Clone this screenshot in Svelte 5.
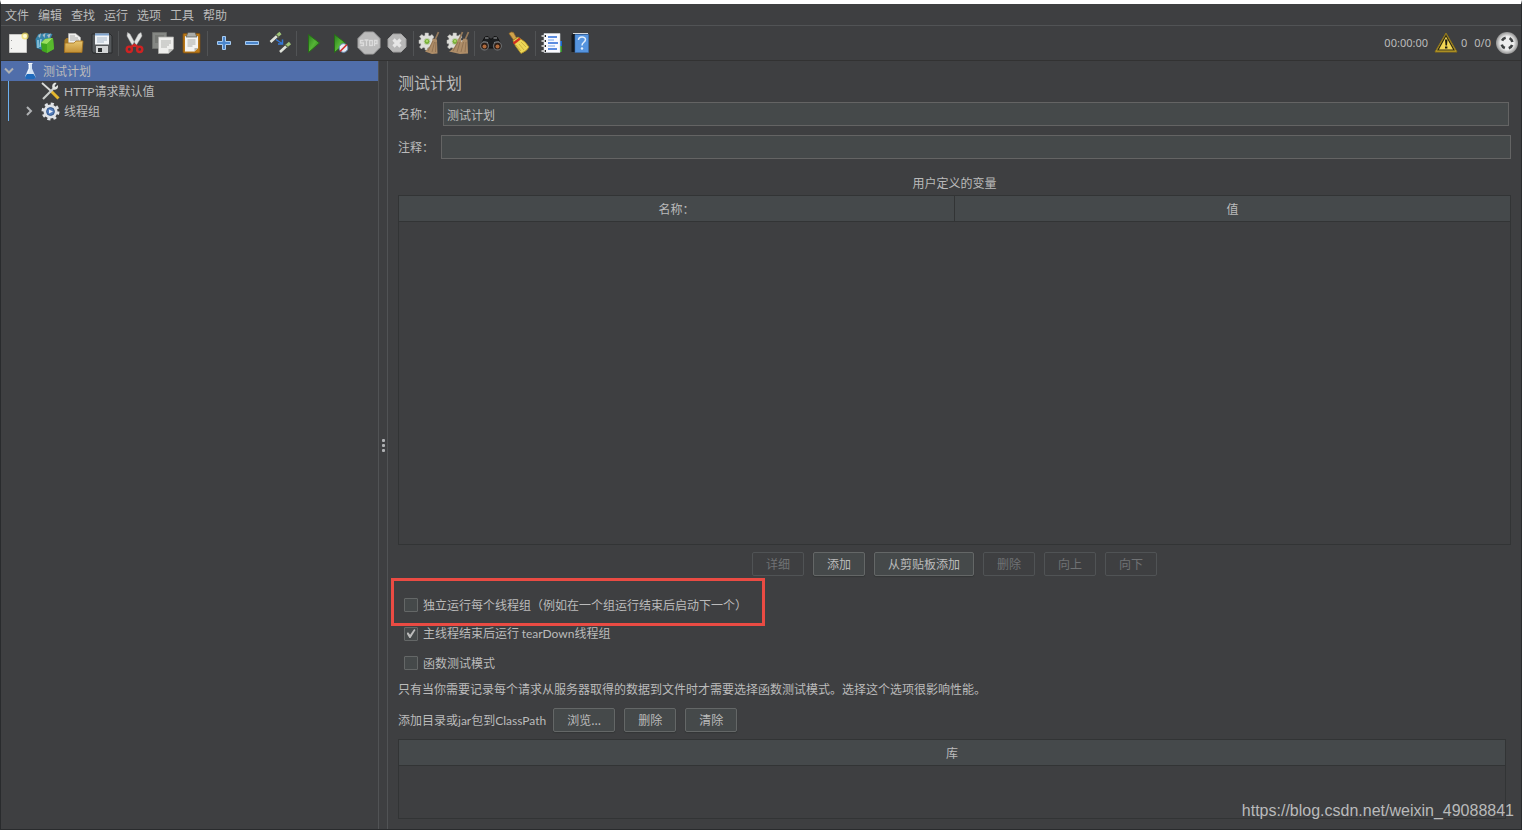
<script>
	const menus = ['文件', '编辑', '查找', '运行', '选项', '工具', '帮助'];

	const gear =
		'<path d="M7 2h3.500v2.500l1.500.5 2-1.500L16 6l-1.500 2 .5 1.500h2V13l-2.500.5-.5 1 1 2-2.500 1.500-1.500-1.500-1.500.5V19H7v-2l-2-.5L3.500 18 1.500 16 3 14l-.5-1.500H1V9h1.500l.5-1.500L1.500 5.500 4 3.500 5.500 5 7 4.500z" fill="#dededa" stroke="#b5b5b1" stroke-width=".5"/><circle cx="9" cy="10.500" r="3" fill="#76ad36" stroke="#c5d2b5"/><circle cx="9" cy="10" r="1.300" fill="#a5d468"/>';

	// toolbar buttons, one array per separated group
	const groups = [
		[
			{ label: '新建', svg: '<path d="M3.500 3.500h17v18h-17z" fill="#f3f3f1" stroke="#c5c5c3"/><path d="M5 9h1v1H5zM5 17h1v1H5z" fill="#999"/><circle cx="19" cy="5" r="3.600" fill="#f2df62" opacity=".75"/><circle cx="19" cy="5" r="2" fill="#fffbd0"/>' },
			{ label: '模板', svg: '<path d="M1.500 8l3-5 8-1 6 1-3 7-7 9-6-2z" fill="#3684aa"/><path d="M4 5l3-3-1 5zM8.500 4l3-2-1 5zM13 4l4-1.500-2 5z" fill="#a9bec8"/><path d="M4 9v8M7 8l-1 8" stroke="#a7d5e8" stroke-width="1.300"/><path d="M7 12l4-4 8-1 1 11-7 4-5-2z" fill="#3fa51f"/><path d="M7 12l4-4 8-1-6 6z" fill="#9be060"/><path d="M13 13l6-6 1 11-7 4z" fill="#58b92d"/>' },
			{ label: '打开', svg: '<path d="M2.500 20V9l2-2h3l1 2h11v11z" fill="#a67825"/><path d="M6.500 13V2.500h7l5 4V13z" fill="#f0f0ee" stroke="#b9b9b5" stroke-width=".6"/><path d="M8 5h5M8 7h8M8 9h9" stroke="#a3a3a0" stroke-width=".9"/><path d="M3 12h9l2-2h7l-1 11.500H2.500z" fill="url(#gold)" stroke="#a2701c" stroke-width=".8"/>' },
			{ label: '保存', svg: '<path d="M3 3h17l2 2v17H3l-1-2V3z" fill="#55585b" stroke="#292b2d"/><path d="M5 2.500h14v11H5z" fill="#f1f4f7"/><path d="M5 2.500h14v2H5z" fill="#7fa5d0"/><path d="M7 7h10M7 9h10M7 11h7" stroke="#a7b7c8"/><path d="M6 15h12v7H6z" fill="#d3d5d6"/><path d="M8 17h4v4H8z" fill="#2b2e30"/>' }
		],
		[
			{ label: '剪切', svg: '<path d="M4.500 1.500L7 3l6 11-3 1.500L4 5zM18 1.500L15.500 3l-6 11 3 1.500L19 5z" fill="#e2e4e3" stroke="#a8a8a8" stroke-width=".5"/><g fill="none" stroke="#cf2222" stroke-width="2.400"><ellipse cx="6.300" cy="18.300" rx="2.600" ry="2.700"/><ellipse cx="16.700" cy="18.300" rx="2.600" ry="2.700"/><path d="M8 16l3.500-2L15 16"/></g>' },
			{ label: '复制', svg: '<path d="M1.500 1.500h14v16h-14z" fill="#858784" stroke="#6c6e6b"/><path d="M4 5h9M4 7h9M4 9h4M4 11h3" stroke="#666865"/><path d="M7.500 6h15v12l-5 4.500h-10z" fill="#eeeeec" stroke="#a9aaa7" stroke-width=".8"/><path d="M10 10h10M10 12h10M10 14h8M10 16h6" stroke="#b1b2af"/><path d="M17.500 22v-4H22z" fill="#bebfbb"/>' },
			{ label: '粘贴', svg: '<rect x="4" y="2.500" width="17" height="19.500" rx="1" fill="#b97818" stroke="#805010" stroke-width=".8"/><path d="M6 5h13v12l-3.500 3.500H6z" fill="#f3f3f1"/><path d="M9 1.500h7L18 6H7z" fill="#a9aba7" stroke="#575955" stroke-width=".7"/><path d="M8.500 9h8M8.500 11h8M8.500 13h8M8.500 15h5" stroke="#a8aaa5"/><path d="M15.500 20.500V17H19z" fill="#b6b7b3"/>' }
		],
		[
			{ label: '展开', svg: '<path d="M10.500 5.500h3v5h5v3h-5v5h-3v-5h-5v-3h5z" fill="#4b86cc" stroke="#a6caef"/>' },
			{ label: '折叠', svg: '<path d="M5.500 10.500h13v3h-13z" fill="#4b86cc" stroke="#a6caef"/>' },
			{ label: '切换', svg: '<path d="M2.500 11L9 5M12 21l6.500-6" stroke="#dfe2da" stroke-width="2.600"/><path d="M9 5l3.500-3M18.500 15l3.500-3" stroke="#a0c579" stroke-width="3.200"/><path d="M8 3.500l3 3M17 13.500l3 3" stroke="#606b51" stroke-width="1.200"/><path d="M8 8.500l6 4M14.500 8.500V13H10" fill="none" stroke="#3478d8" stroke-width="1.500"/>' }
		],
		[
			{ label: '启动', svg: '<path d="M7.500 3.500v18l11-9.500z" fill="url(#green)" stroke="#286b19"/>' },
			{ label: '不停顿开始', svg: '<path d="M5.500 3.500v18l11-9.500z" fill="url(#green)" stroke="#286b19"/><circle cx="14.500" cy="17" r="4.300" fill="#e9eef4" stroke="#6f94bc"/><path d="M11 20.500l7-7" stroke="#cf3232" stroke-width="1.700"/>' },
			{ label: '停止', svg: '<path d="M7.500 1h9L23 7.500v9L16.500 23h-9L1 16.500v-9z" fill="#bbb" stroke="#a2a2a2"/><g fill="none" stroke="#dcdcdc" stroke-width="1.300"><path d="M6.500 9.500H3.500v2.500h3v2.500h-3M7.500 9h4M9.500 9v6M17.500 15V9.500h2.500v3h-2.500"/><rect x="12.700" y="9.500" width="2.600" height="5"/></g>' },
			{ label: '关闭', svg: '<path d="M8 3h8l5 5v8l-5 5H8l-5-5V8z" fill="#b8b8b8" stroke="#a1a1a1"/><path d="M8.500 8.500l7 7M15.500 8.500l-7 7" stroke="#e6e6e6" stroke-width="3.200"/>' }
		],
		[
			{ label: '清除', svg: gear + '<path d="M20.500 1L17 9" stroke="#94795a" stroke-width="1.800"/><path d="M15 7.500l4 1 .5 14-5.500.5-7-2.500c4-3 6-7 8-13z" fill="#ae8d68"/><path d="M15 10l-5 10M16.500 11L14 21M18 11l-.5 10" stroke="#86694b" stroke-width=".7"/>' },
			{ label: '清除全部', svg: gear + '<path d="M16.500 1L13 9M22.500 1L19 9" stroke="#94795a" stroke-width="1.800"/><path d="M12 7.500l3 1 .5 3 2-4 4 1 .5 14-8 .5-11-2.500c4-2 7-6 9-13z" fill="#ae8d68"/><path d="M12 11l-5 9M14 11l-3 10M17.500 11L15 21M20 11l-1 10" stroke="#86694b" stroke-width=".7"/>' }
		],
		[
			{ label: '搜索', svg: '<path d="M1.500 14L6 6l3-.5 2 2.500h2l2-2.500 3 .5 4.500 8v3h-21z" fill="#1c1e20" stroke="#111"/><path d="M6 7h3.500M14.500 7H18M4 11l5 .5M15 11.500l5-.5" stroke="#a0a2a4" stroke-width="1.100"/><g fill="#2a1c15" stroke="#656769" stroke-width="1.300"><circle cx="5.500" cy="15" r="4"/><circle cx="18.500" cy="15" r="4"/></g><circle cx="5.500" cy="15.500" r="2" fill="#b06a3c"/><circle cx="18.500" cy="15.500" r="2" fill="#b06a3c"/>' },
			{ label: '重置搜索', svg: '<path d="M2 2.500Q4 0 6.500 1.500L9.500 7l-3 2z" fill="#cfa24a" stroke="#94672a" stroke-width=".7"/><path d="M6 9.500L11 6l7 5 4 5q-2 4-8 6.500L8.500 15z" fill="#ecd657" stroke="#ae8c22" stroke-width=".8"/><path d="M9 14l5 6M12 13l5 6M14 11l5 5" stroke="#c3a838" stroke-width=".8"/><path d="M6.500 12.500L13 7.500" stroke="#d2301f" stroke-width="2.400"/>' }
		],
		[
			{ label: '函数助手', svg: '<path d="M18 10h4v5h-4z" fill="#1767cf"/><path d="M18 15h4v6h-4z" fill="#329326"/><path d="M4 2.500h16v19H4z" fill="#f9faff" stroke="#d5d8dd" stroke-width=".6"/><path d="M8 6h9M8 12h10M8 18h9" stroke="#2868d6" stroke-width="1.300"/><path d="M8 9h6M8 15h7" stroke="#76a6eb"/><path d="M4 4h2v2H4zM4 9h2v2H4zM4 14h2v2H4zM4 19h2v2H4z" fill="#1e2022"/><path d="M1.500 5h3.500M1.500 10h3.500M1.500 15h3.500M1.500 20h3.500" stroke="#e3e3e3" stroke-width="1.400"/>' },
			{ label: '帮助', svg: '<path d="M3.500 4l2-2h14v19h-16z" fill="#15191e"/><path d="M5 2.500h15" stroke="#d4d8dc"/><path d="M7 3.500h13.500v18H7z" fill="#5594df" stroke="#386fb3" stroke-width=".6"/><path d="M10.500 9c0-4 7-4 7-.5 0 3-3.500 2.500-3.500 6" fill="none" stroke="#e3effc" stroke-width="1.500"/><circle cx="14" cy="17.500" r="1.200" fill="#e3effc"/>' }
		]
	];

	const actions = [
		{ label: '详细', disabled: true },
		{ label: '添加', disabled: false },
		{ label: '从剪贴板添加', disabled: false },
		{ label: '删除', disabled: true },
		{ label: '向上', disabled: true },
		{ label: '向下', disabled: true }
	];

	let name = $state('测试计划');
	let comment = $state('');
	let serial = $state(false);
	let tearDown = $state(true);
	let functional = $state(false);
</script>

<svg class="defs" aria-hidden="true">
	<defs>
		<linearGradient id="gold" x2="0" y2="1"><stop stop-color="#e8c771" /><stop offset="1" stop-color="#c39035" /></linearGradient>
		<linearGradient id="green" x2="1" y2="1"><stop stop-color="#267d1b" /><stop offset=".5" stop-color="#56b536" /><stop offset="1" stop-color="#1f6c17" /></linearGradient>
		<radialGradient id="ball"><stop offset=".6" stop-color="#eee" /><stop offset="1" stop-color="#929292" /></radialGradient>
	</defs>
</svg>

<div class="window">
	<nav class="menubar">
		{#each menus as menu}
			<button>{menu}</button>
		{/each}
	</nav>

	<header class="toolbar">
		{#each groups as group}
			<div class="group">
				{#each group as tool}
					<button aria-label={tool.label}>
						<svg viewBox="0 0 24 24">{@html tool.svg}</svg>
					</button>
				{/each}
			</div>
		{/each}
		<div class="status">
			<span>00:00:00</span>
			<button class="warning" aria-label="日志">
				<svg viewBox="0 0 24 24">
					<path d="M12 2l11 19H1z" fill="#c9a92c" stroke="#8d7319" stroke-linejoin="round" />
					<path d="M12 4.500l8 14.500H4z" fill="#f2d654" stroke="#2f2b15" stroke-width="1.200" />
					<path d="M11 8.500h2.500l-.5 6h-1.500zM11 15.500h2.400v2H11z" fill="#201e12" />
				</svg>
			</button>
			<span>0</span>
			<span class="threads">0/0</span>
			<svg viewBox="0 0 24 24">
				<circle cx="12" cy="12" r="11" fill="url(#ball)" />
				<circle cx="12" cy="12" r="5.500" fill="none" stroke="#3e4142" stroke-width="2.600" stroke-dasharray="4.600 4.040" stroke-dashoffset="-2" />
			</svg>
		</div>
	</header>

	<div class="body">
		<aside class="tree">
			<div class="node selected">
				<button class="toggle" aria-label="折叠">
					<svg viewBox="0 0 20 20"><path d="M4 7.500l4 4 4-4" fill="none" stroke="#afb1b3" stroke-width="2" /></svg>
				</button>
				<svg viewBox="0 0 20 20">
					<path d="M8.500 2.500h3.500v5l3.500 8q0 2-1.500 2H6.500q-1.500 0-1.500-2l3.500-8z" fill="#d3e2f3" />
					<path d="M7 13h6.500l2 3q0 2-1.500 2H6.500Q5 18 5 16z" fill="#1f6bbd" />
					<path d="M8 2.500h4.500M9.500 3.500v4l-2 5" fill="none" stroke="#f3f8fd" />
				</svg>
				<span>测试计划</span>
			</div>
			<div class="children">
				<div class="node">
					<i class="toggle"></i>
					<svg viewBox="0 0 20 20">
						<path d="M1 2l9 8" stroke="#d9dbd9" stroke-width="1.800" />
						<path d="M10 10l7.500 7.500" stroke="#e4b72e" stroke-width="3" />
						<path d="M2 18L13 7" stroke="#c9ccca" stroke-width="2.200" />
						<path d="M17 4l-2.500 2-1-1 2-3c-3-1-5 2-4 5s5 2 5.500-1z" fill="#e2e4e1" />
					</svg>
					<span><span class="latin">HTTP</span>请求默认值</span>
				</div>
				<div class="node">
					<button class="toggle" aria-label="展开">
						<svg viewBox="0 0 20 20"><path d="M4 6l4 4-4 4" fill="none" stroke="#afb1b3" stroke-width="2" /></svg>
					</button>
					<svg viewBox="0 0 20 20">
						<circle cx="9.500" cy="10.500" r="7.500" fill="none" stroke="#dfe2e6" stroke-width="3" stroke-dasharray="3 2.890" />
						<circle cx="9.500" cy="10.500" r="7" fill="#dfe2e6" />
						<circle cx="9.500" cy="10.500" r="3.900" fill="#537cba" stroke="#32568b" />
						<path d="M8 8.500v4l4-2z" fill="#e5edf8" />
					</svg>
					<span>线程组</span>
				</div>
			</div>
		</aside>

		<div class="divider"><i></i><i></i><i></i></div>

		<main>
			<h1>测试计划</h1>
			<div class="field inner">
				<label for="name">名称：</label>
				<input id="name" type="text" bind:value={name} />
			</div>
			<div class="field">
				<label for="comment">注释：</label>
				<input id="comment" type="text" bind:value={comment} />
			</div>

			<h2>用户定义的变量</h2>
			<div class="grid variables">
				<table>
					<thead>
						<tr><th>名称：</th><th>值</th></tr>
					</thead>
				</table>
			</div>
			<div class="actions">
				{#each actions as action}
					<button class="btn" disabled={action.disabled}>{action.label}</button>
				{/each}
			</div>

			<div class="checks">
				<label class="marked"><input type="checkbox" bind:checked={serial} />独立运行每个线程组（例如在一个组运行结束后启动下一个）</label>
				<label><input type="checkbox" bind:checked={tearDown} /><span>主线程结束后运行 <span class="latin">tearDown</span>线程组</span></label>
				<label><input type="checkbox" bind:checked={functional} />函数测试模式</label>
			</div>
			<p>只有当你需要记录每个请求从服务器取得的数据到文件时才需要选择函数测试模式。选择这个选项很影响性能。</p>

			<div class="classpath">
				<span>添加目录或<span class="latin">jar</span>包到<span class="latin">ClassPath</span></span>
				<button class="btn">浏览...</button>
				<button class="btn">删除</button>
				<button class="btn">清除</button>
			</div>
			<div class="grid library">
				<table>
					<thead>
						<tr><th>库</th></tr>
					</thead>
				</table>
			</div>
		</main>
	</div>
	<div class="watermark">https://blog.csdn.net/weixin_49088841</div>
</div>

<style>
	:global(body) {
		background: #3e3f41;
	}

	.defs {
		position: absolute;
		width: 0;
		height: 0;
	}

	.window {
		position: relative;
		display: flex;
		flex-direction: column;
		box-sizing: border-box;
		min-height: 100vh;
		border: 1px solid #292b2d;
		border-top: 4px solid #fff;
		background: #3e3f41;
		color: #bbb;
		font: 12px/20px 'Noto Sans CJK SC', sans-serif;
	}

	button,
	input {
		margin: 0;
		padding: 0;
		border: 0;
		background: none;
		color: inherit;
		font: inherit;
	}

	svg {
		display: block;
		flex: none;
	}

	.latin {
		font-family: Lato, sans-serif;
	}

	.menubar {
		display: flex;
		gap: 9px;
		height: 21px;
		padding-left: 4px;
		border-bottom: 1px solid #515355;
	}

	.toolbar {
		display: flex;
		align-items: center;
		height: 34px;
		padding-left: 3px;
		border-bottom: 1px solid #323232;
	}

	.group {
		display: flex;
	}

	.group + .group::before {
		content: '';
		width: 1px;
		height: 25px;
		margin: 0 2px;
		background: #515355;
	}

	.group button {
		width: 28px;
		padding: 0 2px;
	}

	.group svg,
	.status svg {
		width: 24px;
		height: 24px;
	}

	.status {
		display: flex;
		align-items: center;
		margin-left: auto;
		padding-right: 2px;
		font-family: 'Noto Sans', sans-serif;
		font-size: 11px;
	}

	.warning {
		margin: 0 3px 0 6px;
	}

	.threads {
		margin: 0 4px 0 7px;
	}

	.body {
		display: flex;
		flex: 1;
	}

	.tree {
		width: 377px;
		flex: none;
	}

	.node {
		display: flex;
		align-items: center;
		height: 20px;
		line-height: 22px;
	}

	.node svg {
		width: 20px;
		height: 20px;
	}

	.node > span {
		margin-left: 3px;
	}

	.toggle {
		width: 19px;
		height: 20px;
		flex: none;
	}

	.selected {
		background: #506eaa;
	}

	.children {
		margin-left: 7px;
		padding-left: 14px;
		border-left: 1px solid #6cb0ef;
	}

	.children .toggle {
		width: 18px;
	}

	.divider {
		display: flex;
		flex-direction: column;
		align-items: center;
		justify-content: center;
		gap: 2px;
		width: 8px;
		flex: none;
		border: solid #515355;
		border-width: 0 1px;
	}

	.divider i {
		width: 3px;
		height: 3px;
		border-radius: 1px;
		background: #afb1b3;
	}

	main {
		display: flex;
		flex: 1;
		flex-direction: column;
		min-width: 0;
		padding: 11px 10px 10px;
	}

	h1,
	h2,
	p {
		margin: 0;
		font-size: 12px;
		font-weight: normal;
	}

	h1 {
		margin-bottom: 10px;
		font-size: 16px;
	}

	h2 {
		margin: 5px 0 2px;
		text-align: center;
	}

	.field {
		display: flex;
		align-items: center;
		margin-bottom: 9px;
	}

	.field label {
		width: 43px;
		line-height: 22px;
	}

	.field input {
		flex: 1;
		box-sizing: border-box;
		height: 24px;
		padding: 0 3px;
		border: 1px solid #646464;
		background: #45494a;
	}

	.inner {
		padding-right: 2px;
	}

	.field.inner label {
		width: 45px;
	}

	.grid {
		border: 1px solid #323435;
	}

	table {
		width: 100%;
		border-collapse: collapse;
		table-layout: fixed;
	}

	th {
		height: 25px;
		padding: 0;
		border-bottom: 1px solid #323435;
		background: #45494b;
		font-weight: normal;
		line-height: 25px;
	}

	th + th {
		border-left: 1px solid #323435;
	}

	.variables {
		flex: 1;
	}

	.actions {
		display: flex;
		justify-content: center;
		gap: 9px;
		margin-top: 7px;
	}

	.btn {
		height: 24px;
		padding: 0 13px;
		border: 1px solid #646767;
		border-radius: 2px;
		background: #45494a;
		box-shadow: 0 1px 1px #343637;
	}

	.btn:disabled {
		border-color: #505355;
		background: none;
		box-shadow: none;
		color: #707274;
	}

	.checks {
		display: flex;
		flex-direction: column;
		align-items: flex-start;
		margin-top: 14px;
	}

	.checks label {
		display: flex;
		align-items: center;
		gap: 5px;
		height: 29px;
		padding: 0 10px 0 6px;
	}

	.checks input {
		display: grid;
		place-items: center;
		width: 14px;
		height: 14px;
		box-sizing: border-box;
		border: 1px solid #646767;
		border-radius: 1px;
		background: #45494a;
		appearance: none;
	}

	.checks input:checked::before {
		content: '';
		width: 9px;
		height: 9px;
		background: #bbb;
		clip-path: polygon(0 48%, 18% 35%, 40% 65%, 85% 0, 100% 12%, 45% 100%, 32% 100%);
	}

	.marked {
		position: relative;
	}

	.marked::after {
		content: '';
		position: absolute;
		inset: -12px -8px -7px -7px;
		border: 3px solid #ea4b43;
	}

	p {
		margin: 2px 0 9px;
	}

	.classpath {
		display: flex;
		align-items: center;
		gap: 9px;
	}

	.classpath > span {
		margin-right: -2px;
	}

	.library {
		height: 78px;
		margin: 7px 5px 0 0;
	}

	.watermark {
		position: absolute;
		right: 7px;
		bottom: 8px;
		color: #b9babb;
		font: 16px/20px 'Liberation Sans', sans-serif;
	}
</style>
